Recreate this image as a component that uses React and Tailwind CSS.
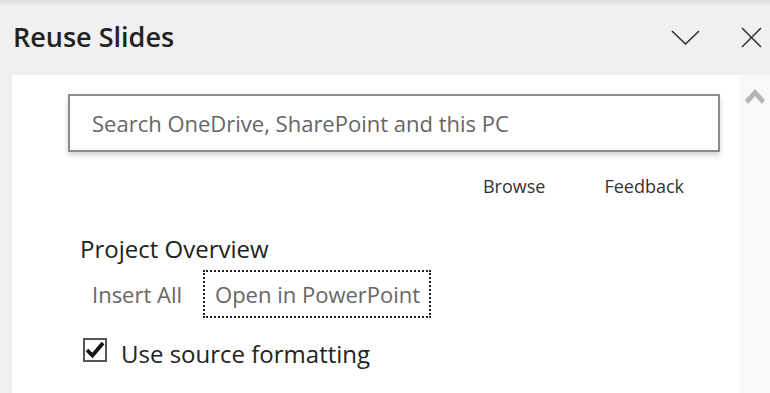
import React from "react";

const font = { fontFamily: '"Open Sans", "Noto Sans", sans-serif' };

const ChevronDown = () => (
  <svg width="29" height="15" viewBox="0 0 29 15" fill="none">
    <polyline points="1,1 14.5,14 28,1" stroke="#333" strokeWidth="1.6" />
  </svg>
);

const CloseIcon = () => (
  <svg width="21" height="21" viewBox="0 0 21 21" fill="none">
    <line x1="1" y1="1" x2="20" y2="20" stroke="#333" strokeWidth="1.6" />
    <line x1="20" y1="1" x2="1" y2="20" stroke="#333" strokeWidth="1.6" />
  </svg>
);

const ScrollUp = () => (
  <svg width="20" height="16" viewBox="0 0 20 16">
    <polygon points="10,0 20,11 17,15 10,7 3,15 0,11" fill="#b4b4b4" />
  </svg>
);

const CheckBox = () => (
  <div className="w-[24px] h-[24px] border-2 border-[#555] bg-white flex items-center justify-center shrink-0">
    <svg width="20" height="18" viewBox="0 0 20 18">
      <polyline points="2,9 7.5,14.5 18,2" fill="none" stroke="#111" strokeWidth="3.8" />
    </svg>
  </div>
);

export default function App() {
  return (
    <div className="w-[770px] h-[393px] bg-[#f0f0f0] overflow-hidden relative flex flex-col" style={font}>
      <div className="absolute top-0 left-0 right-0 h-[6px] bg-gradient-to-b from-[#dcdcdc] to-[#f0f0f0]" />

      <div className="h-[75px] flex items-center shrink-0">
        <div className="pl-[13px] text-[27px] font-semibold text-[#222] leading-[32px] -mt-[2px]">
          Reuse Slides
        </div>
        <div className="ml-auto flex items-center gap-[41px] pr-[8px] -mt-[1px]">
          <ChevronDown />
          <CloseIcon />
        </div>
      </div>

      <div className="flex flex-1">
        <div className="w-[12px]" />
        <div className="w-[728px] bg-white flex flex-col">
          <div className="ml-[56px] mt-[19px] w-[652px] h-[58px] border-2 border-[#8c8c8c] bg-white shadow-[0_3px_5px_rgba(0,0,0,0.18)] flex items-center pl-[22px]">
            <span className="text-[22px] leading-[28px] text-[#666]">Search OneDrive, SharePoint and this PC</span>
          </div>

          <div className="flex justify-end gap-[59px] pr-[56px] mt-[22px] text-[18px] text-[#333] leading-[24px]">
            <span>Browse</span>
            <span>Feedback</span>
          </div>

          <div className="ml-[68px] mt-[37px] text-[24px] text-[#222] leading-[28px]">
            Project Overview
          </div>

          <div className="flex items-center ml-[76px] mt-[7px]">
            <span className="text-[22px] text-[#666] leading-[28px] px-[4px]">Insert All</span>
            <span className="ml-[17px] h-[48px] flex items-center pl-[10px] pr-[9px] border-2 border-dotted border-[#222] text-[22px] text-[#666] leading-[28px]">
              Open in PowerPoint
            </span>
          </div>

          <div className="flex items-start ml-[71px] mt-[20px] gap-[14px]">
            <CheckBox />
            <span className="mt-[2px] text-[24px] text-[#222] leading-[28px]">Use source formatting</span>
          </div>
        </div>
        <div className="w-[30px] bg-[#f8f8f8] flex justify-center pt-[14px]">
          <ScrollUp />
        </div>
      </div>
    </div>
  );
}
